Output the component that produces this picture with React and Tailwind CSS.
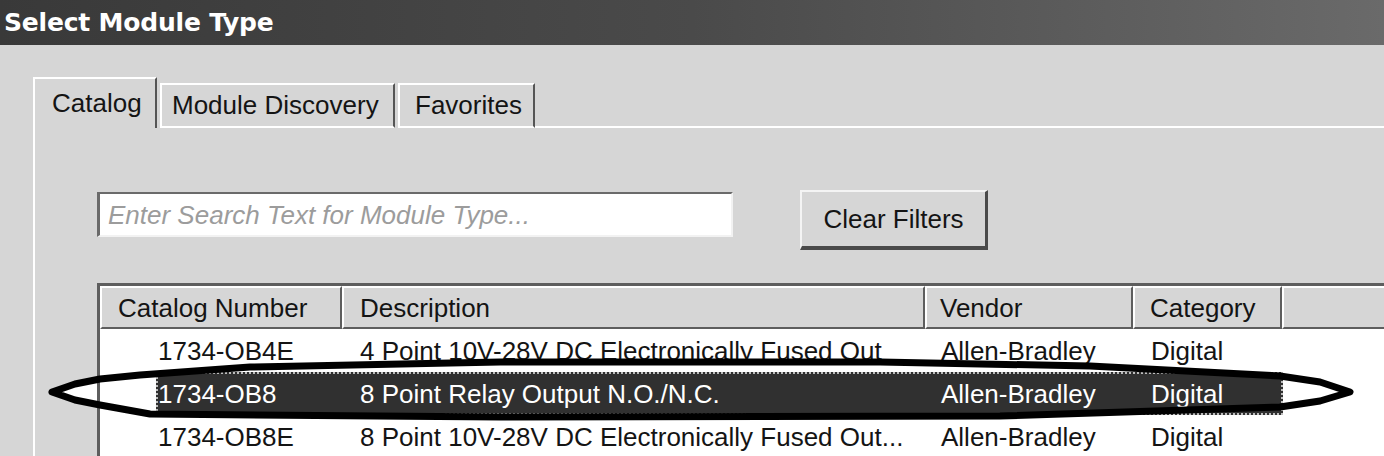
import React from "react";

const font = { fontFamily: '"Liberation Sans", Arial, sans-serif' };

const rows = [
  { cat: "1734-OB4E", desc: "4 Point 10V-28V DC Electronically Fused Out", vendor: "Allen-Bradley", category: "Digital", sel: false },
  { cat: "1734-OB8", desc: "8 Point Relay Output N.O./N.C.", vendor: "Allen-Bradley", category: "Digital", sel: true },
  { cat: "1734-OB8E", desc: "8 Point 10V-28V DC Electronically Fused Out...", vendor: "Allen-Bradley", category: "Digital", sel: false },
];

function HeaderCell({ w, children, pl }) {
  return (
    <div
      className={`h-[43px] shrink-0 border-t-2 border-l-2 border-white border-r-2 border-b-2 border-r-[#5e5e5e] border-b-[#5e5e5e] flex items-center ${w} ${pl}`}
    >
      {children}
    </div>
  );
}

export default function App() {
  return (
    <div
      className="relative w-[1384px] h-[456px] overflow-hidden bg-[#d6d6d6] text-[#141414] text-[26px] leading-none flex flex-col"
      style={font}
    >
      {/* Title bar */}
      <div className="h-[45px] shrink-0 bg-gradient-to-r from-[#393939] via-[#4a4a4a] to-[#6a6a6a] flex items-center pl-[4px]">
        <span
          className="text-white font-bold text-[25px] tracking-[-0.2px]"
          style={{ fontFamily: '"DejaVu Sans", Verdana, sans-serif' }}
        >
          Select Module Type
        </span>
      </div>

      {/* Tab strip */}
      <div className="h-[83px] shrink-0 flex items-end pl-[33px]">
        <div className="w-[124px] h-[51px] shrink-0 border-t-2 border-l-2 border-white border-r-2 border-r-[#555] flex items-start pt-[11px] pl-[17px]">
          Catalog
        </div>
        <div className="ml-[3px] w-[235px] h-[45px] shrink-0 border-t-2 border-l-2 border-b-2 border-white border-r-2 border-r-[#555] flex items-center pl-[10px] pb-[1px] whitespace-nowrap">
          Module Discovery
        </div>
        <div className="ml-[3px] w-[137px] h-[45px] shrink-0 border-t-2 border-l-2 border-b-2 border-white border-r-2 border-r-[#555] flex items-center pl-[15px] pb-[1px]">
          Favorites
        </div>
        <div className="flex-1 border-b-2 border-white" />
      </div>

      {/* Panel */}
      <div className="flex-1 ml-[33px] border-l-2 border-white pl-[62px] pt-[64px]">
        <div className="flex items-start">
          <div className="w-[636px] h-[45px] shrink-0 bg-white border-t-2 border-l-[3px] border-[#6a6a6a] border-b-2 border-r-2 border-b-[#f2f2f2] border-r-[#f2f2f2] flex items-center pl-[8px]">
            <span className="italic text-[#9c9c9c]">Enter Search Text for Module Type...</span>
          </div>
          <div className="ml-[67px] -mt-[2px] w-[188px] h-[60px] shrink-0 border-t-2 border-l-2 border-[#f4f4f4] border-r-[3px] border-b-[4px] border-r-[#4a4a4a] border-b-[#4a4a4a] flex items-center justify-center pb-[1px]">
            Clear Filters
          </div>
        </div>

        {/* Table */}
        <div className="mt-[33px] border-t-[3px] border-l-[3px] border-[#5e5e5e] bg-white">
          <div className="flex bg-[#d6d6d6]">
            <HeaderCell w="w-[242px]" pl="pl-[16px]">Catalog Number</HeaderCell>
            <HeaderCell w="w-[583px]" pl="pl-[16px]">Description</HeaderCell>
            <HeaderCell w="w-[208px]" pl="pl-[13px]">Vendor</HeaderCell>
            <HeaderCell w="w-[149px]" pl="pl-[15px]">Category</HeaderCell>
            <div className="h-[43px] flex-1 border-t-2 border-l-2 border-white border-b-2 border-b-[#5e5e5e]" />
          </div>
          {rows.map((r) => (
            <div key={r.cat} className="h-[43px] flex pl-[56px] whitespace-nowrap">
              <div
                className={`w-[1127px] h-[43px] flex items-center border-2 border-dotted ${
                  r.sel ? "bg-[#303030] text-white border-[#bdbdbd]" : "border-transparent"
                }`}
              >
                <div className="w-[187px] shrink-0 pl-0">{r.cat}</div>
                <div className="w-[583px] shrink-0 pl-[15px]">{r.desc}</div>
                <div className="w-[208px] shrink-0 pl-[13px]">{r.vendor}</div>
                <div className="w-[149px] shrink-0 pl-[15px]">{r.category}</div>
              </div>
            </div>
          ))}
        </div>
      </div>

      {/* Hand-drawn annotation ellipse */}
      <svg
        className="absolute left-0 top-0 pointer-events-none"
        width="1384"
        height="456"
        viewBox="0 0 1384 456"
      >
        <polygon points="56,392 97,381 97,404" fill="#ffffff" />
        <path
          d="M 52 392 L 75 384 L 100 379 L 140 375 L 250 367 L 500 362 L 880 362 L 1090 366 L 1280 376 L 1320 382 L 1350 392 L 1320 401 L 1280 407 L 1000 416 L 500 417 L 150 414 L 100 405 L 75 400 Z"
          fill="none"
          stroke="#000"
          strokeWidth="7"
          strokeLinejoin="round"
        />
      </svg>
    </div>
  );
}
